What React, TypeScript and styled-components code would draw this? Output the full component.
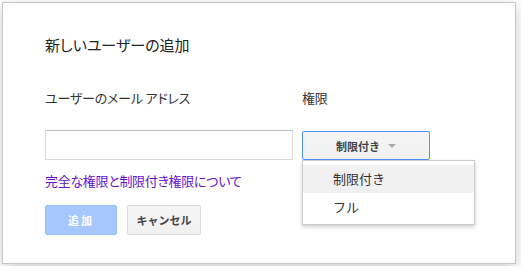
import React from 'react';
import styled, { createGlobalStyle } from 'styled-components';

const Global = createGlobalStyle`
  body {
    margin: 0;
    background: #ffffff;
    font-family: "Noto Sans CJK JP", "Liberation Sans", sans-serif;
  }
`;

const Dialog = styled.div`
  position: relative;
  box-sizing: border-box;
  width: 514px;
  height: 262px;
  margin: 2px;
  padding: 32px 42px 0;
  background: #ffffff;
  border: 1px solid #c6c6c6;
  box-shadow: 0 4px 16px rgba(0, 0, 0, 0.2);
  color: #222;
`;

const Title = styled.div`
  font-size: 15px;
  line-height: 20px;
  color: #222;
  font-feature-settings: "palt";
`;

const Form = styled.div`
  display: grid;
  grid-template-columns: 248px 128px;
  column-gap: 9px;
  margin-top: 35px;
`;

const Label = styled.div`
  font-size: 13px;
  line-height: 16px;
  color: #333;
  font-feature-settings: "palt";
  letter-spacing: -0.2px;
`;

const Input = styled.input`
  box-sizing: border-box;
  width: 248px;
  height: 30px;
  margin-top: 24px;
  border: 1px solid #d9d9d9;
  border-top-color: #c0c0c0;
  background: #fff;
  outline: none;
`;

const Select = styled.div`
  position: relative;
  margin-top: 25px;
`;

const SelectButton = styled.div`
  box-sizing: border-box;
  height: 29px;
  display: flex;
  align-items: center;
  justify-content: center;
  gap: 8px;
  border: 1px solid #4d90fe;
  border-radius: 2px;
  background: linear-gradient(#f5f5f5, #f1f1f1);
  color: #444;
  font-size: 11px;
  font-weight: 700;
`;

const Arrow = styled.span`
  width: 0;
  height: 0;
  border-left: 4px solid transparent;
  border-right: 4px solid transparent;
  border-top: 4px solid #aaa;
  margin-top: 1px;
`;

const Menu = styled.div`
  position: absolute;
  top: 29px;
  left: 0;
  z-index: 2;
  box-sizing: border-box;
  width: 173px;
  padding: 4px 0 3px;
  background: #fff;
  border: 1px solid rgba(0, 0, 0, 0.2);
  box-shadow: 0 2px 4px rgba(0, 0, 0, 0.2);
`;

const MenuItem = styled.div<{ $active?: boolean }>`
  height: 28px;
  line-height: 28px;
  padding-left: 30px;
  font-size: 13px;
  color: #333;
  background: ${(p) => (p.$active ? '#f1f1f1' : 'transparent')};
`;

const Link = styled.a`
  display: block;
  margin-top: 13px;
  font-size: 13px;
  line-height: 16px;
  color: #6611cc;
  text-decoration: none;
  font-feature-settings: "palt";
  letter-spacing: -0.3px;
`;

const Actions = styled.div`
  display: flex;
  gap: 10px;
  margin-top: 16px;
`;

const Button = styled.div<{ $primary?: boolean }>`
  box-sizing: border-box;
  height: 30px;
  min-width: ${(p) => (p.$primary ? '72px' : '74px')};
  display: flex;
  align-items: center;
  justify-content: center;
  border-radius: 2px;
  font-size: 11px;
  font-weight: 700;
  border: 1px solid ${(p) => (p.$primary ? '#98bcf6' : '#dcdcdc')};
  background: ${(p) => (p.$primary ? '#a6c7fe' : 'linear-gradient(#f5f5f5, #f1f1f1)')};
  color: ${(p) => (p.$primary ? '#ffffff' : '#444')};
  letter-spacing: ${(p) => (p.$primary ? '2px' : '0')};
`;

export default function App() {
  return (
    <>
      <Global />
      <Dialog>
        <Title>新しいユーザーの追加</Title>
        <Form>
          <Label>ユーザーのメール アドレス</Label>
          <Label>権限</Label>
          <Input />
          <Select>
            <SelectButton>
              制限付き
              <Arrow />
            </SelectButton>
            <Menu>
              <MenuItem $active>制限付き</MenuItem>
              <MenuItem>フル</MenuItem>
            </Menu>
          </Select>
        </Form>
        <Link href="#">完全な権限と制限付き権限について</Link>
        <Actions>
          <Button $primary>追加</Button>
          <Button>キャンセル</Button>
        </Actions>
      </Dialog>
    </>
  );
}
